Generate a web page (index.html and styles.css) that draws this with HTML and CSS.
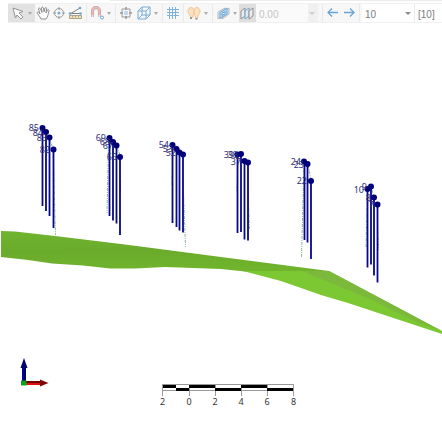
FILE: index.html
```html
<!DOCTYPE html>
<html lang="en">
<head>
  <meta charset="UTF-8">
  <meta name="viewport" content="width=device-width, initial-scale=1">
  <title>3D view</title>
  <link rel="stylesheet" href="styles.css">
</head>
<body>
  <div class="edge"></div>
  <div class="toolbar">
    <div class="group first">
      <button class="tool split pick" aria-label="Select">
        <svg class="icon" viewBox="0 0 16 16"><path d="M3 3l10 3.500-4 1.500 4 4-2 2-4-4-1.500 3z" fill="#fff" stroke="#8c8c8c"/></svg>
        <span class="caret"></span>
      </button>
      <button class="tool" aria-label="Pan">
        <svg class="icon" viewBox="0 0 16 16"><path d="M6 14C5 11 2 9 2 7.500c1-1 2 0 3 1.500L3.500 4c.5-1.500 1.500-1 2 0L7 7.500 6.500 3c.5-1.500 1.500-1 2 0L9 7l1-4c1-1 2 0 1.500 1L11 8l1.500-3c1-1 1.700 0 1.500 1-1 3-1 6-3 8z" fill="#fff" stroke="#858585"/></svg>
      </button>
      <button class="tool" aria-label="Rotate">
        <svg class="icon" viewBox="0 0 16 16"><circle cx="8" cy="8" r="4.500" fill="none" stroke="#929292"/><path d="M8 2v3M8 11v3M2 8h3M11 8h3" stroke="#929292"/><circle cx="8" cy="8" r="1.500" fill="#69a5d4"/></svg>
      </button>
      <button class="tool" aria-label="Measure">
        <svg class="icon" viewBox="0 0 16 16"><path d="M3 9L13 3M4 8.500h9" fill="none" stroke="#777" /><circle cx="3" cy="8.500" r="1.300" fill="#5b9dd2"/><circle cx="13" cy="3" r="1.300" fill="#5b9dd2"/><circle cx="13.500" cy="8.500" r="1.300" fill="#5b9dd2"/><path d="M2.500 10.500h12v3h-12z" fill="#f4dfaa" stroke="#a39a83"/><path d="M5.500 11v1.500M8.500 11v1.500M11.500 11v1.500" stroke="#a39a83"/></svg>
      </button>
    </div>
    <div class="group">
      <button class="tool split" aria-label="Snap">
        <svg class="icon" viewBox="0 0 16 16"><path d="M3.500 12V6a3.500 3.500 0 0 1 7 0v6" fill="none" stroke="#a98c8c" stroke-width="3"/><path d="M3.500 10V6a3.500 3.500 0 0 1 7 0v4" fill="none" stroke="#f0b4b0" stroke-width="2"/><path d="M2.500 11h2M9.500 11h2" stroke="#fff" stroke-width="1.500"/><circle cx="13" cy="12.500" r="1.500" fill="#fff" stroke="#5b9dd2"/></svg>
        <span class="caret"></span>
      </button>
    </div>
    <div class="group">
      <button class="tool" aria-label="Zoom to fit">
        <svg class="icon" viewBox="0 0 16 16"><path d="M4 4h8v8H4z" fill="#f8f8f8" stroke="#8f8f8f"/><path d="M8 2v3M8 11v3M2 8h3M11 8h3" stroke="#8f8f8f" stroke-width="1.500"/><path d="M6 6h4v4H6z" fill="#b8d5f3"/></svg>
      </button>
      <button class="tool split spaced" aria-label="View direction">
        <svg class="icon" viewBox="0 0 16 16"><path d="M2 6h8v8H2zM2 6l4-4h8l-4 4M14 2v8l-4 4M6 2v8h8M6 10l-4 4" fill="none" stroke="#69a5d8"/></svg>
        <span class="caret"></span>
      </button>
    </div>
    <div class="group">
      <button class="tool" aria-label="Grid">
        <svg class="icon" viewBox="0 0 16 16"><path d="M4.500 2v12M7.500 2v12M10.500 2v12M2 4.500h12M2 7.500h12M2 10.500h12" stroke="#74abd9"/></svg>
      </button>
    </div>
    <div class="group">
      <button class="tool split" aria-label="Lighting">
        <svg class="icon" viewBox="0 0 16 16"><path d="M2 6c0-4 6-5 6 0 0 3-1 3-1 5l-1 2H5l-1-2C4 9 2 9 2 6z" fill="#fce3c0" stroke="#efbe85"/><path d="M8 6c0-5 6-4 6 0 0 3-2 3-2 5l-1 3h-1l-1-3c0-2-1-2-1-5z" fill="#fce3c0" stroke="#efbe85"/><path d="M5 12v2M10.500 13v1.500" stroke="#8b8b8b" stroke-width="2"/></svg>
        <span class="caret"></span>
      </button>
    </div>
    <div class="group last">
      <button class="tool split" aria-label="Section planes">
        <svg class="icon" viewBox="0 0 16 16"><path d="M3 7l7-4v6l-7 5zM7 7l7-4v6l-7 5z" fill="#d5e5f3" stroke="#b4b4b4"/><path d="M5 7.500l7-4.500v6L5 13.500z" fill="#b3d3ee" stroke="#5f9fd3"/><path d="M7 8.500l3-2v2l-3 2z" fill="#fff" stroke="#5f9fd3"/></svg>
        <span class="caret"></span>
      </button>
      <button class="tool active" aria-label="Clip to section">
        <svg class="icon" viewBox="0 0 16 16"><path d="M2 6l4-3v8l-4 3z" fill="#eee" stroke="#888"/><path d="M6 6l4-3v8l-4 3z" fill="#dcecf8" stroke="#66a0cd"/><path d="M10 6l4-3v8l-4 3z" fill="#eee" stroke="#888"/></svg>
      </button>
      <div class="combo offset">
        <select aria-label="Section offset" disabled><option>0.00</option></select>
        <span class="caret"></span>
      </div>
    </div>
    <div class="group">
      <button class="tool" aria-label="Previous section">
        <svg class="icon" viewBox="0 0 16 16"><path d="M13 7.500H3M7 3.500l-4 4 4 4" fill="none" stroke="#5a9cd4" stroke-width="1.300"/></svg>
      </button>
      <button class="tool" aria-label="Next section">
        <svg class="icon" viewBox="0 0 16 16"><path d="M3 7.500h10M9 3.500l4 4-4 4" fill="none" stroke="#5a9cd4" stroke-width="1.300"/></svg>
      </button>
    </div>
    <div class="combo width">
      <select aria-label="Section width"><option>10</option></select>
      <span class="caret"></span>
    </div>
    <input class="step" type="text" aria-label="Step" value="[10]">
  </div>

  <svg class="scene" viewBox="0 24 442 399" role="img" aria-label="Drillholes above a surface">
    <defs>
      <linearGradient id="ground" x1="0" y1="0" x2=".15" y2="1">
        <stop offset="0" stop-color="#6fb42f"/>
        <stop offset=".5" stop-color="#6aab2b"/>
        <stop offset="1" stop-color="#70b42d"/>
      </linearGradient>
    </defs>

    <!-- surface -->
    <path d="M1 231L15 231.500 55 236 125 244.500 221 257 329 271 302 272 245 271.500 221 269 165 267 135 268.500 110 268.500 83 265.500 52 263.500 28 260 1 257z" fill="url(#ground)"/>
    <path d="M243 271L329 271 442 331 442 334 348 303 321 295 281 281z" fill="#7bc832"/>
    <path d="M302 271L329 271 442 331 416 322 370 299z" fill="#7bb83b"/>

    <!-- traces -->
    <g class="trace">
      <path d="M42.500 130v30M49 138l4 10 2.500 87"/>
      <path d="M108.500 140l-1.500 73M117 146l3 9M120.500 180v12"/>
      <path d="M173 146l-1 40M183 180l2.500 67"/>
      <path d="M238 156l-1 36M248 190l1.500 40"/>
      <path d="M304 164l-2.500 93M308 165l3 14"/>
      <path d="M367.500 190l-1.500 57M372 190l2 7M377.500 225l1 25"/>
    </g>

    <!-- holes -->
    <g class="hole">
      <path d="M42.500 128v78M46 132v79M49.500 137v79M53.500 149.500V228"/>
      <circle cx="42.500" cy="128" r="3"/><circle cx="46" cy="132" r="3"/><circle cx="49.500" cy="137.500" r="3"/><circle cx="53.500" cy="149.500" r="3"/>
      <text x="39" y="131">85</text><text x="43" y="136">84</text><text x="47" y="141">83</text><text x="50" y="153">82</text>
    </g>
    <g class="hole">
      <path d="M109.500 138v78M113 142v78.500M116.500 145.500v78M120 157v78"/>
      <circle cx="109.500" cy="138" r="3"/><circle cx="113" cy="142" r="3"/><circle cx="116.500" cy="145.500" r="3"/><circle cx="120" cy="157" r="3"/>
      <text x="106" y="141">69</text><text x="110" y="145">68</text><text x="113" y="149">67</text><text x="117" y="160">66</text>
    </g>
    <g class="hole">
      <path d="M172.500 145v78M176.500 149v78M179.500 152.500v78M183 154.500v78"/>
      <circle cx="172.500" cy="145" r="3"/><circle cx="176.500" cy="149" r="3"/><circle cx="179.500" cy="152.500" r="3"/><circle cx="183" cy="154.500" r="3"/>
      <text x="169" y="148">54</text><text x="173" y="152">53</text><text x="176" y="156">52</text>
    </g>
    <g class="hole">
      <path d="M237.500 155v78M241 154v78M244.500 161v78.500M248 162.500v78"/>
      <circle cx="237.500" cy="154.500" r="3"/><circle cx="241" cy="154" r="3"/><circle cx="244.500" cy="161" r="3"/><circle cx="248" cy="162.500" r="3"/>
      <text x="234" y="158">39</text><text x="238" y="158">38</text><text x="241" y="165">37</text>
    </g>
    <g class="hole">
      <path d="M304.500 161.500V240M307.500 164v78.500M311 181v78"/>
      <circle cx="304" cy="161.500" r="3"/><circle cx="307.500" cy="164" r="3"/><circle cx="311" cy="181" r="3"/>
      <text x="301" y="165">24</text><text x="304" y="168">23</text><text x="307" y="184">22</text>
    </g>
    <g class="hole">
      <path d="M367.500 189v78.500M371 186.500v78M374 197.500v78M377.500 204.500v78"/>
      <circle cx="367.500" cy="189" r="3"/><circle cx="371" cy="186.500" r="3"/><circle cx="374" cy="197.500" r="3"/><circle cx="377.500" cy="204.500" r="3"/>
      <text x="364" y="193">10</text><text x="367" y="190">9</text><text x="371" y="201">8</text><text x="374" y="208">7</text>
    </g>

    <!-- axes -->
    <path d="M22 368h4v13h-4z" fill="#0000a0"/>
    <path d="M24 368h2v13h-2z" fill="#000050"/>
    <path d="M24 358l3.500 10h-7z" fill="#00006e"/>
    <path d="M26 381h15v4H26z" fill="#e01010"/>
    <path d="M26 381h15v2H26z" fill="#700000"/>
    <path d="M40 379.500l8.500 3.500-8.500 3.500z" fill="#820808"/>
    <path d="M21 380.500h5.500v5H21z" fill="#0fa01c"/>

    <!-- scale bar -->
    <g class="scale">
      <path class="ticks" d="M162.500 384v12M189.500 384v12M215.500 384v12M241.500 384v12M267.500 384v12M293.500 384v12M162 384.500h132M162 390.500h132"/>
      <path d="M163 385h13v3h-13zM189 385h26v3h-26zM241 385h26v3h-26zM176 388h13v3h-13zM215 388h26v3h-26zM267 388h26v3h-26z"/>
      <text x="162.500" y="405">2</text>
      <text x="189" y="405">0</text>
      <text x="215" y="405">2</text>
      <text x="241" y="405">4</text>
      <text x="267" y="405">6</text>
      <text x="293.500" y="405">8</text>
    </g>
  </svg>
</body>
</html>
```
FILE: styles.css
```css
*{ box-sizing: border-box; }
body{
  margin: 0;
  background: #fff;
  font-family: "Noto Sans", "Open Sans", sans-serif;
  overflow: hidden;
}
.edge{
  height: 1px;
  margin-left: 110px;
  background: #ececec;
}
.toolbar{
  display: flex;
  height: 20px;
  margin: 2px 0 1px 8px;
  background: #f7f7f7;
  border: 1px solid #f0f0f0;
  border-width: 1px 0;
}
.group{
  display: flex;
  flex: none;
  padding: 0 2px;
  border-right: 1px solid #e9e9e9;
}
.first{ padding: 0 3px 0 0; }
.last{ padding-right: 4px; }
.tool{
  display: flex;
  align-items: center;
  flex: none;
  width: 16px;
  padding: 0;
  border: 0;
  background: none;
}
.split{ width: 24px; }
.spaced{ margin-left: 2px; }
.pick{
  width: 27px;
  padding-left: 2px;
  background: #e2e2e2;
}
.active{ 
  width: 17px;
  background: #dedede;
}
.icon{
  flex: none;
  width: 16px;
  height: 16px;
  opacity: .9;
}
.caret{
  flex: none;
  margin-left: 2px;
  border: 2px solid transparent;
  border-top: 3px solid #aaa;
  border-bottom: 0;
}
.combo{
  display: flex;
  position: relative;
  flex: none;
  background: #fff;
}
.combo select,
.step{
  width: 100%;
  margin: 0;
  padding: 4px 3px 0;
  border: 0;
  border-radius: 0;
  background: none;
  color: #7c7c7c;
  font: 10px/14px "Liberation Sans", sans-serif;
  appearance: none;
  outline: none;
}
.combo .caret{
  position: absolute;
  top: 8px;
  right: 3px;
  border-width: 3px 3px 0;
  border-top-color: #8c8c8c;
}
.offset{
  width: 62px;
  background: linear-gradient(to left, #f0f0f0 10px, #fafafa 10px);
}
.offset select:disabled{
  color: #c4c4c4;
  opacity: 1;
}
.offset .caret{ border-top-color: #d0d0d0; }
.width{
  width: 53px;
  margin-left: 2px;
  border-right: 1px solid #ebebeb;
}
.toolbar .step{
  flex: 1;
  min-width: 0;
  width: 0;
  background: #fff;
}
.scene{
  display: block;
  width: 100%;
}
.scene text{ font-size: 9px; }
.hole path{
  fill: none;
  stroke: #08088a;
  stroke-width: 1.8;
}
.hole circle{ fill: #000078; }
.hole text{
  fill: #30307c;
  text-anchor: end;
}
.trace{
  fill: none;
  stroke: #6aa878;
  stroke-width: .8;
  stroke-dasharray: 3 1 1 1;
}
.scale .ticks{
  fill: none;
  stroke: #9a9a9a;
}
.scale text{
  fill: #333;
  text-anchor: middle;
}
```
